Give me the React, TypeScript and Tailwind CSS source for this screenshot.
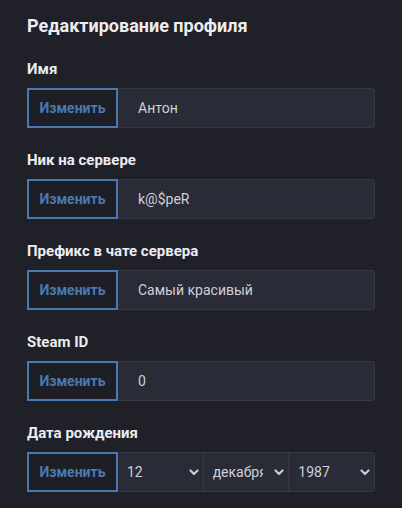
const fieldFont = { fontFamily: 'Roboto, "Noto Sans", sans-serif' }

function ChangeButton() {
	return (
		<button className="h-10 w-[91px] shrink-0 border-2 border-[#4a79b1] bg-[#1d1e26] text-[14px] font-bold text-[#4a79b1]">
			Изменить
		</button>
	)
}

function Chevron() {
	return (
		<svg width="10" height="7" viewBox="0 0 10 7" className="shrink-0">
			<polyline
				points="1.5,1.5 5,5 8.5,1.5"
				fill="none"
				stroke="#c9cad3"
				strokeWidth="2.2"
				strokeLinecap="round"
				strokeLinejoin="round"
			/>
		</svg>
	)
}

function TextField({ label, value }: { label: string; value: string }) {
	return (
		<div className="mt-[23px]">
			<div className="text-[15px] font-bold leading-[18px] text-[#ececf1]">{label}</div>
			<div className="mt-[10px] flex">
				<ChangeButton />
				<div className="flex h-10 flex-1 items-center rounded-r-[3px] border border-l-0 border-[#363844] bg-[#292b37] pl-[20px] text-[14px] text-[#cfd0d8]">
					{value}
				</div>
			</div>
		</div>
	)
}

function SelectBox({ value, clip, last }: { value: string; clip?: boolean; last?: boolean }) {
	return (
		<div
			className={
				'flex h-10 flex-1 items-center justify-between border-y border-[#363844] bg-[#292b37] pl-[9px] pr-[4px] ' +
				(last ? 'rounded-r-[3px] border-r' : 'border-r')
			}
		>
			<span className={clip ? 'block w-[50px] overflow-hidden whitespace-nowrap' : ''}>{value}</span>
			<Chevron />
		</div>
	)
}

export default function App() {
	return (
		<div className="h-[508px] w-[402px] bg-[#202029] px-[27px] pt-[15px]" style={fieldFont}>
			<h1 className="text-[18px] font-bold leading-[22px] text-[#ececf1]">Редактирование профиля</h1>

			<div className="mt-[8px]">
				<TextField label="Имя" value="Антон" />
			</div>
			<TextField label="Ник на сервере" value="k@$peR" />
			<TextField label="Префикс в чате сервера" value="Самый красивый" />
			<TextField label="Steam ID" value="0" />

			<div className="mt-[23px]">
				<div className="text-[15px] font-bold leading-[18px] text-[#ececf1]">Дата рождения</div>
				<div className="mt-[10px] flex text-[14px] text-[#cfd0d8]">
					<ChangeButton />
					<SelectBox value="12" />
					<SelectBox value="декабря" clip />
					<SelectBox value="1987" last />
				</div>
			</div>
		</div>
	)
}
